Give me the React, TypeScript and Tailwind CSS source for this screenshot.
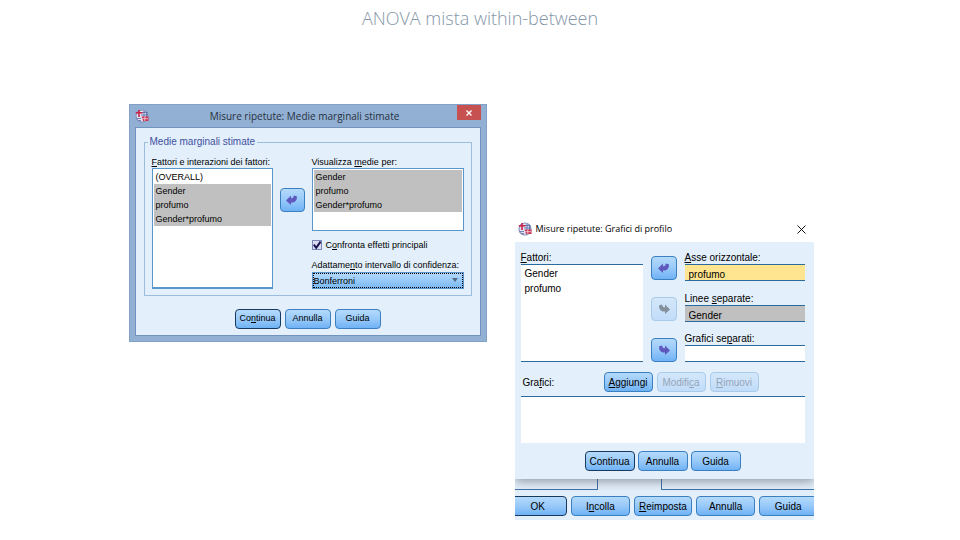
import type { ButtonHTMLAttributes, ReactNode } from "react"

const buttonBase =
  "flex items-center justify-center rounded-[4px] border border-[#3a7fc0] bg-gradient-to-b from-[#b4dafb] via-[#98c9f9] to-[#6fb2f5] text-black disabled:border-[#a9cbea] disabled:from-[#d3e7fa] disabled:via-[#cbe2fa] disabled:to-[#c0dcf9] disabled:text-[#95a5b8]"

function DialogButton({ className = "", children, ...props }: ButtonHTMLAttributes<HTMLButtonElement>) {
  return (
    <button type="button" className={`${buttonBase} whitespace-nowrap ${className}`} {...props}>
      <span>{children}</span>
    </button>
  )
}

function ArrowButton({ direction, label, disabled, className = "" }: { direction: "left" | "right"; label: string; disabled?: boolean; className?: string }) {
  return (
    <button type="button" aria-label={label} disabled={disabled} className={`${buttonBase} h-6 shrink-0 ${className}`}>
      <svg viewBox="0 0 12 10" className={direction === "right" ? "h-[10px] w-3 -scale-x-100" : "h-[10px] w-3"} fill={disabled ? "#84909c" : "#5f58bd"}>
        <path d="M0 5.4 5 0.6V3.2C6.8 3.2 7.6 2.4 7.8 0.4L10.8 1.2C11.4 5 9.4 7.6 5 7.6V10Z" />
      </svg>
    </button>
  )
}

function AppIcon() {
  return (
    <svg viewBox="0 0 14 14" className="h-[14px] w-[14px] shrink-0">
      <circle cx="7" cy="7" r="6" fill="#e3e3f0" stroke="#8a93bd" strokeWidth="1.2" />
      <path d="M6 3.5h6.5M6 6h7M9 2v6M11.5 3v5" stroke="#5a70ab" strokeWidth="0.9" />
      <path d="M1.5 9.5H6M3 11.5h3" stroke="#7584b4" strokeWidth="1.2" />
      <path d="M4 1V8M0.8 3.8H7.5" stroke="#c92349" strokeWidth="1.6" />
      <path d="M6.5 7.5H13.5V12H8Z" fill="#cb3355" />
      <path d="M7 9.7h6M9.8 7.5v4.5" stroke="#f4d5dd" strokeWidth="0.8" />
    </svg>
  )
}

function ListBox({ label, items, className = "", itemClassName = "" }: { label: string; items: { name: string; selected?: boolean }[]; className?: string; itemClassName?: string }) {
  return (
    <ul role="listbox" aria-label={label} className={`bg-white ${className}`}>
      {items.map((item) => (
        <li key={item.name} role="option" aria-selected={!!item.selected} className={`${itemClassName} ${item.selected ? "bg-[#c0c0c0]" : ""}`}>
          {item.name}
        </li>
      ))}
    </ul>
  )
}

function AxisField({ id, label, value = "", className }: { id: string; label: ReactNode; value?: string; className: string }) {
  return (
    <div>
      <label htmlFor={id} className="block h-3 leading-3">{label}</label>
      <input id={id} readOnly defaultValue={value} className={`block h-[17px] w-full border-y border-[#2a6a9c] px-1 pt-1 leading-3 outline-none ${className}`} />
    </div>
  )
}

function MarginalMeansDialog() {
  return (
    <section className="w-full max-w-[358px] border border-[#829fc5] bg-[#92b0d3] px-[5px] pb-[5px] text-[9px]">
      <header className="flex h-[22px] items-center gap-2">
        <AppIcon />
        <h2 className="flex-1 pl-1 text-center font-['Open_Sans',sans-serif] text-[10px] text-[#26303e]">Misure ripetute: Medie marginali stimate</h2>
        <button type="button" aria-label="Chiudi" className="flex h-[15px] w-6 items-center justify-center self-start bg-[#c75050]">
          <svg viewBox="0 0 6 6" className="h-[6px] w-[6px]" stroke="#fff" strokeWidth="1.4">
            <path d="M0.5 0.5 5.5 5.5M5.5 0.5 0.5 5.5" />
          </svg>
        </button>
      </header>

      <div className="border border-[#7193bd] bg-[#e3effb] px-2 pt-2 pb-[6px]">
        <fieldset className="border border-[#9bbcda] px-[7px] pb-[6px]">
          <legend className="-ml-1 px-[2px] text-[10px] leading-3 text-[#4150a0]">Medie marginali stimate</legend>

          <div className="flex justify-between pt-2">
            {/* Fattori disponibili */}
            <div>
              <p className="leading-3 whitespace-nowrap"><u>F</u>attori e interazioni dei fattori:</p>
              <ListBox
                label="Fattori e interazioni dei fattori"
                className="h-[121px] w-[121px] border border-[#5b96cb] border-b-2 p-px leading-[14px]"
                itemClassName="h-[14px] px-[2px]"
                items={[
                  { name: "(OVERALL)" },
                  { name: "Gender", selected: true },
                  { name: "profumo", selected: true },
                  { name: "Gender*profumo", selected: true },
                ]}
              />
            </div>

            <div className="pt-8">
              <ArrowButton direction="left" label="Sposta fattori" className="w-[25px]" />
            </div>

            {/* Medie e confronti */}
            <div className="w-[152px]">
              <p className="leading-3">Visualizza <u>m</u>edie per:</p>
              <ListBox
                label="Visualizza medie per"
                className="h-[63px] border border-[#5b96cb] p-px leading-[14px]"
                itemClassName="h-[14px] px-[2px]"
                items={[
                  { name: "Gender", selected: true },
                  { name: "profumo", selected: true },
                  { name: "Gender*profumo", selected: true },
                ]}
              />
              <label className="mt-2 flex items-center gap-1 leading-3 whitespace-nowrap">
                <span className="relative flex h-[10px] w-[10px]">
                  <input type="checkbox" defaultChecked className="h-[10px] w-[10px] appearance-none border border-[#7c87b5] bg-[#dcdcf2]" />
                  <svg viewBox="0 0 10 10" className="pointer-events-none absolute inset-0" fill="none" stroke="#1c1450" strokeWidth="2">
                    <path d="M1.8 4.6 4.2 7.8 8.6 1.6" />
                  </svg>
                </span>
                <span>C<u>o</u>nfronta effetti principali</span>
              </label>
              <label htmlFor="adjustment" className="mt-2 block leading-3 whitespace-nowrap">Adattame<u>n</u>to intervallo di confidenza:</label>
              <div className="relative mt-px">
                <select id="adjustment" className="block h-[17px] w-full appearance-none border border-[#5b96cb] bg-gradient-to-b from-[#b4dafb] to-[#7ab8f3] px-px leading-3 outline-1 -outline-offset-2 outline-black outline-dotted">
                  <option>Bonferroni</option>
                </select>
                <svg viewBox="0 0 6 4" className="pointer-events-none absolute top-[6px] right-[6px] h-1 w-[6px]" fill="#536b85">
                  <path d="M0 0h6L3 4Z" />
                </svg>
              </div>
            </div>
          </div>
        </fieldset>

        <div className="flex justify-center gap-1 pt-[13px]">
          <DialogButton className="h-5 w-[46px] border-[#16395f]">Co<u>n</u>tinua</DialogButton>
          <DialogButton className="h-5 w-[46px]">Annulla</DialogButton>
          <DialogButton className="h-5 w-[46px]">Guida</DialogButton>
        </div>
      </div>
    </section>
  )
}

function ProfilePlotsDialog() {
  return (
    <section className="w-full max-w-[299px] overflow-hidden bg-[#e3effa] text-[10px]">
      <div className="relative shadow-[0_2px_10px_rgba(60,70,80,0.55)]">
        <header className="flex h-[22px] items-center gap-1 bg-white pr-2 pb-1 pl-[3px]">
          <AppIcon />
          <h2 className="flex-1 font-['Open_Sans',sans-serif] text-[9px] text-black">Misure ripetute: Grafici di profilo</h2>
          <button type="button" aria-label="Chiudi">
            <svg viewBox="0 0 9 9" className="h-[9px] w-[9px]" stroke="#111">
              <path d="M0.5 0.5 8.5 8.5M8.5 0.5 0.5 8.5" />
            </svg>
          </button>
        </header>

        <div className="bg-[#e3effa] pt-[10px] pr-[9px] pb-2 pl-[6px]">
          <div className="flex gap-2">
            <div className="flex-1">
              <p className="leading-3"><u>F</u>attori:</p>
              <ListBox
                label="Fattori"
                className="h-[98px] border-y border-[#2a6a9c] pt-px leading-[15px]"
                itemClassName="px-1"
                items={[{ name: "Gender" }, { name: "profumo" }]}
              />
            </div>
            <div className="flex flex-col justify-between pt-1">
              <ArrowButton direction="left" label="Rimuovi da asse orizzontale" className="w-[26px]" />
              <ArrowButton direction="right" label="Sposta in linee separate" disabled className="w-[26px]" />
              <ArrowButton direction="right" label="Sposta in grafici separati" className="w-[26px]" />
            </div>
            <div className="flex w-[120px] flex-col justify-between">
              <AxisField id="horizontal" label={<><u>A</u>sse orizzontale:</>} value="profumo" className="bg-[#ffe58f]" />
              <AxisField id="lines" label={<>Linee <u>s</u>eparate:</>} value="Gender" className="bg-[#c0c0c0]" />
              <AxisField id="plots" label={<>Grafici se<u>p</u>arati:</>} className="bg-white" />
            </div>
          </div>

          <div className="flex items-center gap-1 pt-[10px] pb-1">
            <label htmlFor="plot-list" className="w-[79px] pl-[2px]">Gra<u>f</u>ici:</label>
            <DialogButton className="h-5 w-[49px] border-[#1c5fa0]"><u>A</u>ggiungi</DialogButton>
            <DialogButton className="h-5 w-[49px]" disabled>Modifi<u>c</u>a</DialogButton>
            <DialogButton className="h-5 w-[49px]" disabled><u>R</u>imuovi</DialogButton>
          </div>
          <textarea id="plot-list" readOnly className="block h-[47px] w-full resize-none border-t border-[#2a6a9c] bg-white outline-none" />

          <div className="flex justify-center gap-[3px] pt-2">
            <DialogButton className="h-5 w-[50px] border-[#16395f]">Continua</DialogButton>
            <DialogButton className="h-5 w-[50px]">Annulla</DialogButton>
            <DialogButton className="h-5 w-[50px]">Guida</DialogButton>
          </div>
        </div>
      </div>

      {/* Bordo inferiore della finestra principale */}
      <div className="flex h-[11px] justify-between">
        <div className="w-[83px] border-r border-b border-[#3d74a8]" />
        <div className="w-[153px] border-b border-l border-[#3d74a8]" />
      </div>
      <div className="-mr-1 -ml-[6px] flex gap-1 pt-[6px] pb-1">
        <DialogButton className="h-5 flex-1 border-[#16395f]">OK</DialogButton>
        <DialogButton className="h-5 flex-1">I<u>n</u>colla</DialogButton>
        <DialogButton className="h-5 flex-1"><u>R</u>eimposta</DialogButton>
        <DialogButton className="h-5 flex-1">Annulla</DialogButton>
        <DialogButton className="h-5 flex-1">Guida</DialogButton>
      </div>
    </section>
  )
}

export default function App() {
  return (
    <div className="min-h-screen bg-white font-['Liberation_Sans',Arial,sans-serif] text-black">
      <h1 className="pt-[6px] text-center font-['Open_Sans',sans-serif] text-lg leading-6 font-light text-[#8496a8]">ANOVA mista within-between</h1>
      <main className="flex items-start justify-center gap-7 pt-[74px] pr-[18px]">
        <MarginalMeansDialog />
        <div className="w-full max-w-[299px] pt-[116px]">
          <ProfilePlotsDialog />
        </div>
      </main>
    </div>
  )
}
